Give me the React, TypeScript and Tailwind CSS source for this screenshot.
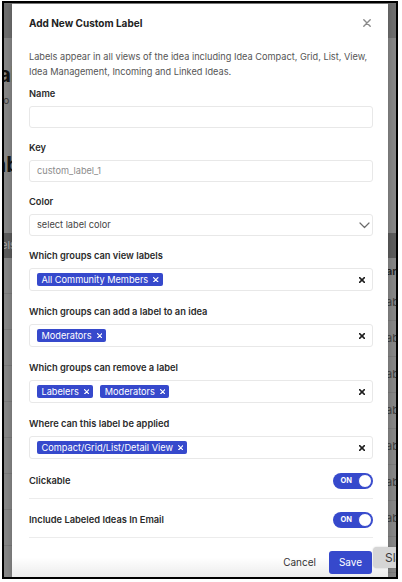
import React from "react";

const XSmall = ({ className = "", size = 6, stroke = 1.4 }: { className?: string; size?: number; stroke?: number }) => (
  <svg width={size} height={size} viewBox="0 0 10 10" className={className} fill="none">
    <path d="M1 1 L9 9 M9 1 L1 9" stroke="currentColor" strokeWidth={stroke * (10 / size)} strokeLinecap="round" />
  </svg>
);

function Chip({ label }: { label: string }) {
  return (
    <span className="inline-flex items-center h-[13px] rounded-[2px] bg-[#3649cc] pl-[4.5px] pr-[4px] gap-[5px] text-[9.2px] leading-none text-white whitespace-nowrap">
      {label}
      <XSmall size={5.5} stroke={1.2} className="text-white" />
    </span>
  );
}

function Label({ children }: { children: React.ReactNode }) {
  return <div className="text-[9.3px] leading-[12px] font-semibold text-[#2b2b2b]">{children}</div>;
}

function MultiField({ label, chips, className = "" }: { label: string; chips: string[]; className?: string }) {
  return (
    <div className={className}>
      <Label>{label}</Label>
      <div className="mt-[6px] h-[23px] rounded-[3px] border border-[#e8e8e8] flex items-center pl-[7px] pr-[7px]">
        <div className="flex-1 flex gap-[7px]">
          {chips.map((c) => (
            <Chip key={c} label={c} />
          ))}
        </div>
        <XSmall size={6} stroke={1.5} className="text-[#1e1e1e]" />
      </div>
    </div>
  );
}

function Toggle() {
  return (
    <div className="w-[40px] h-[16px] rounded-full bg-[#3649cc] flex items-center justify-between pl-[7.5px] pr-[1px]">
      <span className="text-[7.5px] leading-none font-bold text-white">ON</span>
      <span className="w-[14px] h-[14px] rounded-full bg-white border-[1.5px] border-[#3649cc]" />
    </div>
  );
}

function Modal() {
  return (
    <div className="absolute left-[8px] top-[1px] bottom-0 w-[376px] bg-white flex flex-col shadow-[0_0_6px_rgba(0,0,0,0.25)]">
      <div className="h-[38px] shrink-0 flex items-center justify-between pl-[17px] pr-[17px]">
        <div className="text-[10px] font-bold text-[#222] leading-[16px]">Add New Custom Label</div>
        <XSmall size={8} stroke={1.4} className="text-[#8a8a8a]" />
      </div>
      <div className="pl-[17px] pr-[15px] flex flex-col">
        <p className="mt-[7px] text-[9.2px] leading-[15px] text-[#555]">
          Labels appear in all views of the idea including Idea Compact, Grid, List, View, Idea Management, Incoming and Linked Ideas.
        </p>

        <div className="mt-[9px]">
          <Label>Name</Label>
          <div className="mt-[6px] h-[22px] rounded-[3px] border border-[#e8e8e8]" />
        </div>

        <div className="mt-[14px]">
          <Label>Key</Label>
          <div className="mt-[6px] h-[22px] rounded-[3px] border border-[#e8e8e8] flex items-center pl-[7px] text-[9.2px] text-[#8c8c8c]">
            custom_label_1
          </div>
        </div>

        <div className="mt-[14px]">
          <Label>Color</Label>
          <div className="mt-[6px] h-[22px] rounded-[3px] border border-[#e8e8e8] flex items-center justify-between pl-[7px] pr-[2px] text-[9.2px] text-[#444]">
            <span>select label color</span>
            <svg width="11" height="7" viewBox="0 0 11 7" fill="none">
              <path d="M1 1 L5.5 5.5 L10 1" stroke="#6b6b6b" strokeWidth="1.2" strokeLinecap="round" strokeLinejoin="round" />
            </svg>
          </div>
        </div>

        <MultiField className="mt-[14px]" label="Which groups can view labels" chips={["All Community Members"]} />
        <MultiField className="mt-[15px]" label="Which groups can add a label to an idea" chips={["Moderators"]} />
        <MultiField className="mt-[15px]" label="Which groups can remove a label" chips={["Labelers", "Moderators"]} />
        <MultiField className="mt-[15px]" label="Where can this label be applied" chips={["Compact/Grid/List/Detail View"]} />

        <div className="mt-[1px] h-[39px] pt-[4px] border-b border-[#ececec] flex items-center justify-between">
          <Label>Clickable</Label>
          <Toggle />
        </div>
        <div className="h-[39px] pt-[4px] border-b border-[#ececec] flex items-center justify-between">
          <Label>Include Labeled Ideas In Email</Label>
          <Toggle />
        </div>
      </div>
      <div className="flex-1 bg-gradient-to-b from-white via-white to-[#ececec] pl-[17px] pr-[16px] pt-[13px] flex justify-end items-start">
        <div className="flex items-center">
          <span className="text-[10px] text-[#333] mr-[13px]">Cancel</span>
          <button className="h-[23px] w-[43px] rounded-[3px] bg-[#3649cc] text-white text-[10px] flex items-center justify-center">
            Save
          </button>
        </div>
      </div>
    </div>
  );
}

function Rows({ text, count }: { text: string; count: number }) {
  return (
    <>
      {Array.from({ length: count }).map((_, i) => (
        <div key={i} className="h-[36px] border-b border-[#7a7a7a] flex items-center whitespace-nowrap text-[11px] text-[#3c3c3c] ml-[-2px]">
          {text}
        </div>
      ))}
    </>
  );
}

function Background() {
  return (
    <div className="flex h-full">
      <div className="w-[8px] shrink-0 flex flex-col overflow-hidden">
        <div className="h-[35px] shrink-0 bg-[#6e6e6e]" />
        <div className="h-[195px] shrink-0 bg-[#868686] flex flex-col">
          <div className="mt-[25px] ml-[-17px] text-[21px] font-bold leading-[24px] text-[#151515] whitespace-nowrap">Labels</div>
          <div className="mt-[7px] ml-[-4px] text-[10px] leading-[12px] text-[#3a3a3a] whitespace-nowrap">to</div>
          <div className="mt-[47px] ml-[-10px] text-[21px] font-bold leading-[24px] text-[#151515] whitespace-nowrap">ab</div>
        </div>
        <div className="h-[25px] shrink-0 bg-[#5c5c5c] flex items-center whitespace-nowrap text-[11px] text-[#a8a8a8] ml-[-3px]">els</div>
        <div className="flex-1 bg-[#868686] flex flex-col">
          <Rows text="" count={9} />
        </div>
      </div>
      <div className="flex-1" />
      <div className="w-[8px] shrink-0 flex flex-col overflow-hidden">
        <div className="h-[35px] shrink-0 bg-[#6e6e6e]" />
        <div className="h-[195px] shrink-0 bg-[#868686]" />
        <div className="h-[25px] shrink-0 bg-[#5c5c5c]" />
        <div className="flex-1 bg-[#868686] flex flex-col">
          <div className="h-[27px] flex items-center text-[11px] font-semibold text-[#222] whitespace-nowrap ml-[-2px]">and</div>
          <Rows text="abel" count={8} />
        </div>
      </div>
    </div>
  );
}

function SlaTag() {
  return (
    <div className="absolute left-[369px] top-[544px] h-[21px] w-[40px] rounded-l-[4px] bg-[#d5d5d5] flex items-center pl-[12px] text-[12px] text-[#3a3a3a] shadow-[0_0_2px_rgba(0,0,0,0.2)]">
      Sla
    </div>
  );
}

export default function App() {
  return (
    <div className="w-[402px] h-[582px] bg-white pl-[2px] pt-[1px] font-[Inter,sans-serif]">
      <div className="relative w-[396px] h-[578px] border-2 border-black overflow-hidden bg-[#868686]">
        <Background />
        <Modal />
        <SlaTag />
      </div>
    </div>
  );
}
